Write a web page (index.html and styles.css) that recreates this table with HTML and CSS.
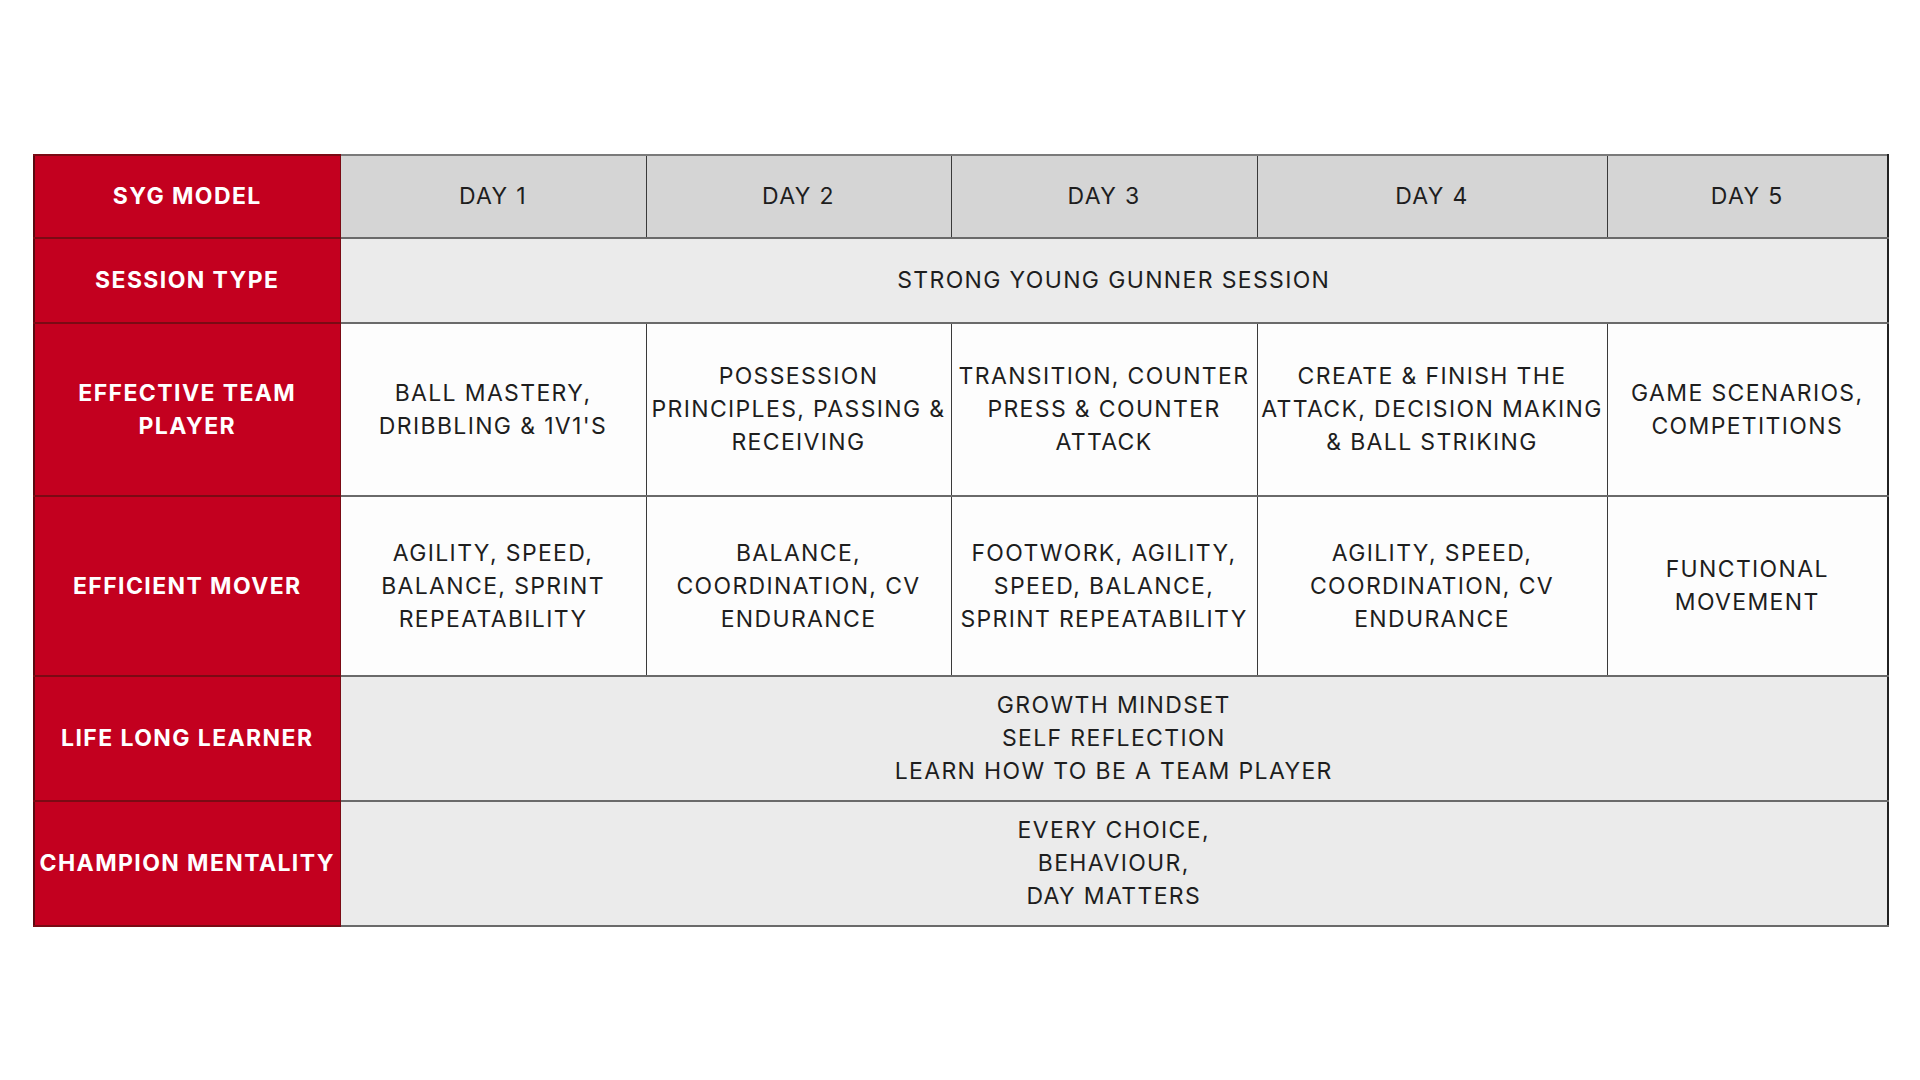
FILE: index.html
```html
<!DOCTYPE html>
<html lang="en">
<head>
<meta charset="utf-8">
<title>SYG Model</title>
<link rel="stylesheet" href="styles.css">
</head>
<body>
<div class="page">
  <table class="syg">
    <colgroup>
      <col class="c-label">
      <col class="c-d1">
      <col class="c-d2">
      <col class="c-d3">
      <col class="c-d4">
      <col class="c-d5">
    </colgroup>
    <tr class="r-head">
      <th class="label">SYG MODEL</th>
      <td class="day">DAY 1</td>
      <td class="day">DAY 2</td>
      <td class="day">DAY 3</td>
      <td class="day">DAY 4</td>
      <td class="day">DAY 5</td>
    </tr>
    <tr class="r-session">
      <th class="label">SESSION TYPE</th>
      <td class="span" colspan="5">STRONG YOUNG GUNNER SESSION</td>
    </tr>
    <tr class="r-team">
      <th class="label">EFFECTIVE TEAM<br>PLAYER</th>
      <td class="cell">BALL MASTERY,<br>DRIBBLING &amp; 1V1'S</td>
      <td class="cell">POSSESSION<br>PRINCIPLES, PASSING &amp;<br>RECEIVING</td>
      <td class="cell">TRANSITION, COUNTER<br>PRESS &amp; COUNTER<br>ATTACK</td>
      <td class="cell">CREATE &amp; FINISH THE<br>ATTACK, DECISION MAKING<br>&amp; BALL STRIKING</td>
      <td class="cell">GAME SCENARIOS,<br>COMPETITIONS</td>
    </tr>
    <tr class="r-mover">
      <th class="label">EFFICIENT MOVER</th>
      <td class="cell">AGILITY, SPEED,<br>BALANCE, SPRINT<br>REPEATABILITY</td>
      <td class="cell">BALANCE,<br>COORDINATION, CV<br>ENDURANCE</td>
      <td class="cell">FOOTWORK, AGILITY,<br>SPEED, BALANCE,<br>SPRINT REPEATABILITY</td>
      <td class="cell">AGILITY, SPEED,<br>COORDINATION, CV<br>ENDURANCE</td>
      <td class="cell">FUNCTIONAL<br>MOVEMENT</td>
    </tr>
    <tr class="r-learner">
      <th class="label">LIFE LONG LEARNER</th>
      <td class="span" colspan="5">GROWTH MINDSET<br>SELF REFLECTION<br>LEARN HOW TO BE A TEAM PLAYER</td>
    </tr>
    <tr class="r-champ">
      <th class="label">CHAMPION MENTALITY</th>
      <td class="span" colspan="5">EVERY CHOICE,<br>BEHAVIOUR,<br>DAY MATTERS</td>
    </tr>
  </table>
</div>
</body>
</html>
```
FILE: styles.css
```css
html, body {
  margin: 0;
  padding: 0;
  background: #ffffff;
}
.page {
  padding: 154px 0 0 33px;
}
.syg {
  border-collapse: collapse;
  table-layout: fixed;
  width: 1854px;
  font-family: "Inter", "Liberation Sans", sans-serif;
  font-size: 23px;
  line-height: 33px;
  color: #1e1e1e;
  text-align: center;
}
.c-label { width: 306px; }
.c-d1 { width: 306px; }
.c-d2 { width: 305px; }
.c-d3 { width: 306px; }
.c-d4 { width: 350px; }
.c-d5 { width: 281px; }

.syg th, .syg td {
  padding: 0 1px;
  vertical-align: middle;
  white-space: nowrap;
  border: 2px solid #6a6a6a;
  border-left: 1px solid #3a3a3a;
  border-right: 1px solid #3a3a3a;
  letter-spacing: 1.35px;
}
.syg th.label {
  background: #c3001f;
  color: #ffffff;
  font-weight: 700;
  font-size: 23px;
  border-color: #7a0a14;
  border-left: 2px solid #5a0a10;
  letter-spacing: 1.4px;
}
.syg td:last-child {
  border-right: 2px solid #222222;
}
.r-head { height: 83px; }
.r-session { height: 85px; }
.r-team { height: 173px; }
.r-mover { height: 180px; }
.r-learner { height: 125px; }
.r-champ { height: 125px; }

.day { background: #d5d5d5; }
.span { background: #ebebeb; }
.cell { background: #fdfdfd; }
.r-head td { border-top: 2px solid #7a7a7a; }
```
